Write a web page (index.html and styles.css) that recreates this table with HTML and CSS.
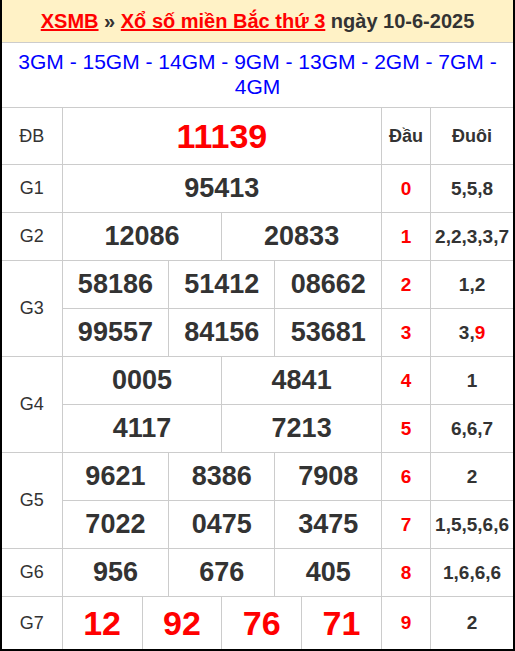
FILE: index.html
```html
<!DOCTYPE html>
<html lang="vi">
<head>
<meta charset="utf-8">
<link rel="stylesheet" href="styles.css">
</head>
<body>
<div class="wrap">
  <div class="head"><a class="lk">XSMB</a> » <a class="lk">Xổ số miền Bắc thứ 3</a> ngày 10-6-2025</div>
  <div class="codes">3GM - 15GM - 14GM - 9GM - 13GM - 2GM - 7GM - 4GM</div>
  <table class="kq">
    <colgroup>
      <col class="c-lb">
      <col class="c-n"><col class="c-n"><col class="c-n"><col class="c-n"><col class="c-n"><col class="c-n">
      <col class="c-n"><col class="c-n"><col class="c-n"><col class="c-n"><col class="c-n"><col class="c-n">
      <col class="c-d">
      <col class="c-t">
    </colgroup>
    <tr class="r-db">
      <td class="lb">ĐB</td>
      <td colspan="12" class="n db">11139</td>
      <th class="hd">Đầu</th>
      <th class="hd">Đuôi</th>
    </tr>
    <tr>
      <td class="lb">G1</td>
      <td colspan="12" class="n">95413</td>
      <td class="d">0</td><td class="t">5,5,8</td>
    </tr>
    <tr>
      <td class="lb">G2</td>
      <td colspan="6" class="n">12086</td><td colspan="6" class="n">20833</td>
      <td class="d">1</td><td class="t">2,2,3,3,7</td>
    </tr>
    <tr>
      <td class="lb" rowspan="2">G3</td>
      <td colspan="4" class="n">58186</td><td colspan="4" class="n">51412</td><td colspan="4" class="n">08662</td>
      <td class="d">2</td><td class="t">1,2</td>
    </tr>
    <tr>
      <td colspan="4" class="n">99557</td><td colspan="4" class="n">84156</td><td colspan="4" class="n">53681</td>
      <td class="d">3</td><td class="t">3,<span class="red">9</span></td>
    </tr>
    <tr>
      <td class="lb" rowspan="2">G4</td>
      <td colspan="6" class="n">0005</td><td colspan="6" class="n">4841</td>
      <td class="d">4</td><td class="t">1</td>
    </tr>
    <tr>
      <td colspan="6" class="n">4117</td><td colspan="6" class="n">7213</td>
      <td class="d">5</td><td class="t">6,6,7</td>
    </tr>
    <tr>
      <td class="lb" rowspan="2">G5</td>
      <td colspan="4" class="n">9621</td><td colspan="4" class="n">8386</td><td colspan="4" class="n">7908</td>
      <td class="d">6</td><td class="t">2</td>
    </tr>
    <tr>
      <td colspan="4" class="n">7022</td><td colspan="4" class="n">0475</td><td colspan="4" class="n">3475</td>
      <td class="d">7</td><td class="t">1,5,5,6,6</td>
    </tr>
    <tr>
      <td class="lb">G6</td>
      <td colspan="4" class="n">956</td><td colspan="4" class="n">676</td><td colspan="4" class="n">405</td>
      <td class="d">8</td><td class="t">1,6,6,6</td>
    </tr>
    <tr class="r-g7">
      <td class="lb">G7</td>
      <td colspan="3" class="n g7">12</td><td colspan="3" class="n g7">92</td><td colspan="3" class="n g7">76</td><td colspan="3" class="n g7">71</td>
      <td class="d">9</td><td class="t">2</td>
    </tr>
  </table>
</div>
</body>
</html>
```
FILE: styles.css
```css
html, body {
  margin: 0;
  padding: 0;
  background: #fff;
}
body {
  font-family: "Liberation Sans", Arial, sans-serif;
  color: #333;
}
.wrap {
  width: 515px;
  height: 651px;
  box-sizing: border-box;
  border: 2px solid #000;
  border-top: none;
  overflow: hidden;
}
.head {
  background: #fff2c6;
  height: 42px;
  border-bottom: 1px solid #ccc;
  box-sizing: content-box;
  display: flex;
  align-items: center;
  justify-content: center;
  font-weight: bold;
  font-size: 20px;
  color: #333;
  white-space: pre;
}
.lk {
  color: #f00;
  text-decoration: underline;
}
.codes {
  height: 64px;
  box-sizing: border-box;
  padding: 6px 4px 0;
  text-align: center;
  color: #00f;
  font-size: 21px;
  line-height: 25px;
}
.kq {
  width: 511px;
  border-collapse: collapse;
  table-layout: fixed;
}
.c-lb { width: 60px; }
.c-n { width: 26.5px; }
.c-d { width: 49px; }
.c-t { width: 82px; }
.kq td, .kq th {
  border: 1px solid #ccc;
  text-align: center;
  padding: 0;
  height: 47px;
  white-space: nowrap;
}
.kq td:first-child { border-left: none; }
.kq td:last-child, .kq th:last-child { border-right: none; }
.r-db td, .r-db th { height: 56px; }
.r-g7 td { height: 52px; border-bottom: none; }
.lb {
  font-size: 18px;
  color: #333;
}
.n {
  font-size: 27px;
  font-weight: bold;
  color: #333;
}
.db {
  font-size: 34px;
  color: #f00;
}
.g7 {
  font-size: 34px;
  color: #f00;
}
.hd {
  font-size: 18px;
  font-weight: bold;
  color: #333;
}
.d {
  font-size: 19px;
  font-weight: bold;
  color: #f00;
}
.t {
  font-size: 19px;
  font-weight: bold;
  color: #333;
}
.red { color: #f00; }
```
